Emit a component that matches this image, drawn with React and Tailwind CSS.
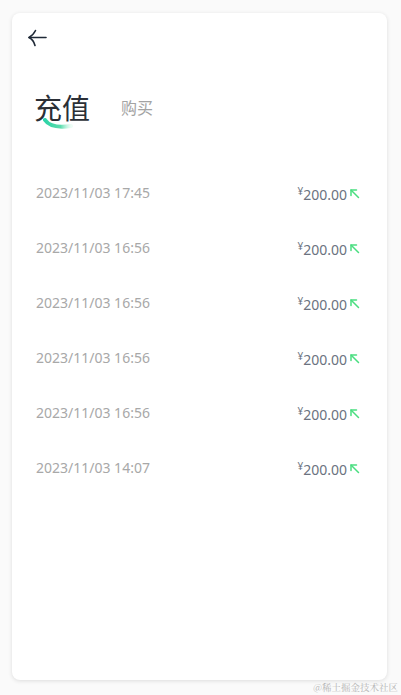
import React, { useState } from "react";

const records = [
  { time: "2023/11/03 17:45", amount: "200.00" },
  { time: "2023/11/03 16:56", amount: "200.00" },
  { time: "2023/11/03 16:56", amount: "200.00" },
  { time: "2023/11/03 16:56", amount: "200.00" },
  { time: "2023/11/03 16:56", amount: "200.00" },
  { time: "2023/11/03 14:07", amount: "200.00" },
];

const font = { fontFamily: '"Noto Sans", "Noto Sans CJK SC", sans-serif' };

const BackIcon = () => (
  <svg width="20" height="18" viewBox="0 0 20 18" fill="none">
    <path d="M2 8.5H19" stroke="#1f2937" strokeWidth="1.6" strokeLinecap="round" />
    <path
      d="M8.5 1.5C7 4.5 5 7 2 8.5C5 10 7 12.5 8 16.5"
      stroke="#1f2937"
      strokeWidth="1.6"
      strokeLinecap="round"
      strokeLinejoin="round"
    />
  </svg>
);

const InIcon = () => (
  <svg width="11" height="11" viewBox="0 0 11 11" fill="none">
    <path d="M2 2L9.5 9.5" stroke="#4ade80" strokeWidth="1.5" strokeLinecap="round" />
    <path d="M2 7.5V2H7.5" stroke="#4ade80" strokeWidth="1.5" strokeLinecap="round" strokeLinejoin="round" />
  </svg>
);

const Swoosh = () => (
  <svg className="absolute left-[9px] top-[24px]" width="30" height="12" viewBox="0 0 30 12" fill="none">
    <defs>
      <linearGradient id="sw" x1="0" y1="0" x2="1" y2="0">
        <stop offset="0" stopColor="#2dd4a7" />
        <stop offset="0.6" stopColor="#34d399" stopOpacity="0.8" />
        <stop offset="1" stopColor="#a7f3d0" stopOpacity="0.2" />
      </linearGradient>
    </defs>
    <path d="M2 2C6 8 14 10 28 8" stroke="url(#sw)" strokeWidth="4" strokeLinecap="round" />
  </svg>
);

export default function App() {
  const [tab, setTab] = useState("recharge");

  return (
    <div className="min-h-[695px] bg-[#fafafa] pl-[12px] pt-[13px] relative" style={font}>
      <div className="w-[375px] h-[667px] bg-white rounded-[8px] shadow-[0_1px_4px_rgba(0,0,0,0.12)] flex flex-col">
        <div className="pl-[15px] pt-[16px]">
          <button className="block">
            <BackIcon />
          </button>
        </div>

        <div className="flex items-end gap-[31px] pl-[22px] pt-[47px]">
          <button onClick={() => setTab("recharge")} className="relative leading-none">
            <span className={tab === "recharge" ? "text-[28px] text-[#2b2f36]" : "text-[16px] text-[#a3a3a3]"}>
              充值
            </span>
            {tab === "recharge" && <Swoosh />}
          </button>
          <button onClick={() => setTab("buy")} className="relative leading-none pb-[6px]">
            <span className={tab === "buy" ? "text-[28px] text-[#2b2f36]" : "text-[16px] text-[#a3a3a3]"}>
              购买
            </span>
            {tab === "buy" && <Swoosh />}
          </button>
        </div>

        <div className="flex flex-col pt-[43px] pl-[24px] pr-[27px]">
          {records.map((r, i) => (
            <div key={i} className="flex items-center justify-between h-[55px]">
              <span className="text-[14px] text-[#a8a8a8]">{r.time}</span>
              <span className="flex items-start">
                <span className="text-[10px] text-[#6b7280] leading-none mt-[2px]">¥</span>
                <span className="text-[14px] text-[#6b7280] leading-none mt-[4px]">{r.amount}</span>
                <span className="ml-[2px] mt-[4px]">
                  <InIcon />
                </span>
              </span>
            </div>
          ))}
        </div>
      </div>
      <div
        className="absolute right-[3px] bottom-[3px] text-[9.5px] text-[#b5b5b5] leading-none"
        style={{ fontFamily: '"Noto Serif CJK SC", "Noto Sans CJK SC", serif' }}
      >
        @稀土掘金技术社区
      </div>
    </div>
  );
}
